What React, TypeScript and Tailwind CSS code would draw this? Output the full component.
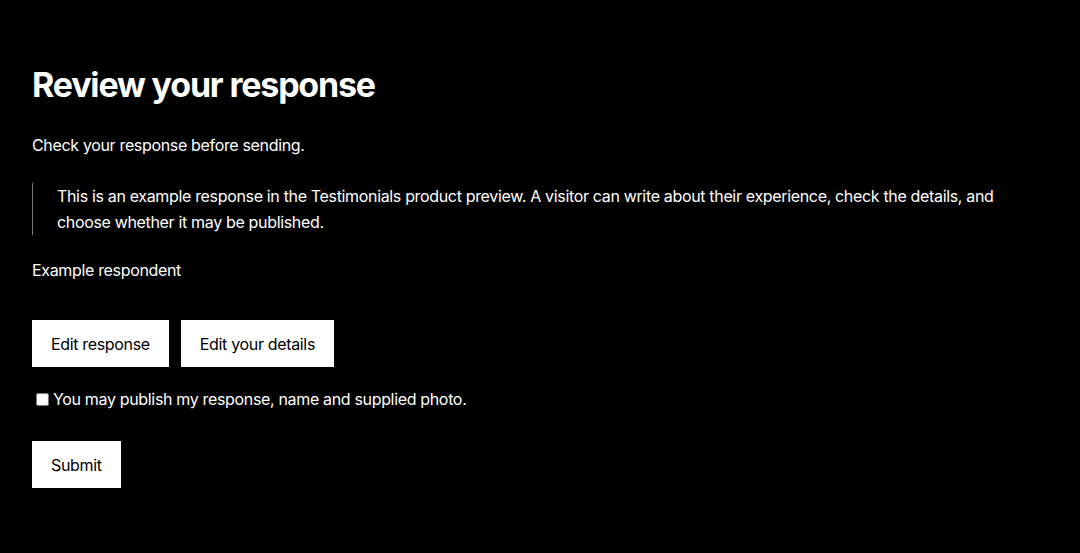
import React, { useState } from "react";

export default function App() {
  const [publish, setPublish] = useState(false);

  return (
    <div
      className="min-h-screen bg-black text-white px-8 pt-[65px] pb-16 tracking-[-0.021em]"
      style={{ fontFamily: "Inter, 'Noto Sans', sans-serif" }}
    >
      <h1 className="text-[34px] leading-[40px] font-bold tracking-[-0.035em]">
        Review your response
      </h1>

      <p className="mt-[27px] text-base leading-[26px]">
        Check your response before sending.
      </p>

      <blockquote className="mt-[25px] border-l border-[#7a7a7a] pl-6 text-base leading-[26px]">
        This is an example response in the Testimonials product preview. A
        visitor can write about their experience, check the details, and choose
        whether it may be published.
      </blockquote>

      <p className="mt-[22px] text-base leading-[26px]">Example respondent</p>

      <div className="mt-[37px] flex gap-3">
        <button className="bg-white text-black text-base h-[47px] px-[19px]">
          Edit response
        </button>
        <button className="bg-white text-black text-base h-[47px] px-[19px]">
          Edit your details
        </button>
      </div>

      <label className="mt-[19px] flex items-center text-base leading-[26px]">
        <input
          type="checkbox"
          checked={publish}
          onChange={(e) => setPublish(e.target.checked)}
          className="ml-[4px] mr-[4px] w-[13px] h-[13px]"
        />
        You may publish my response, name and supplied photo.
      </label>

      <button className="mt-[29px] bg-white text-black text-base h-[47px] px-[19px]">
        Submit
      </button>
    </div>
  );
}
